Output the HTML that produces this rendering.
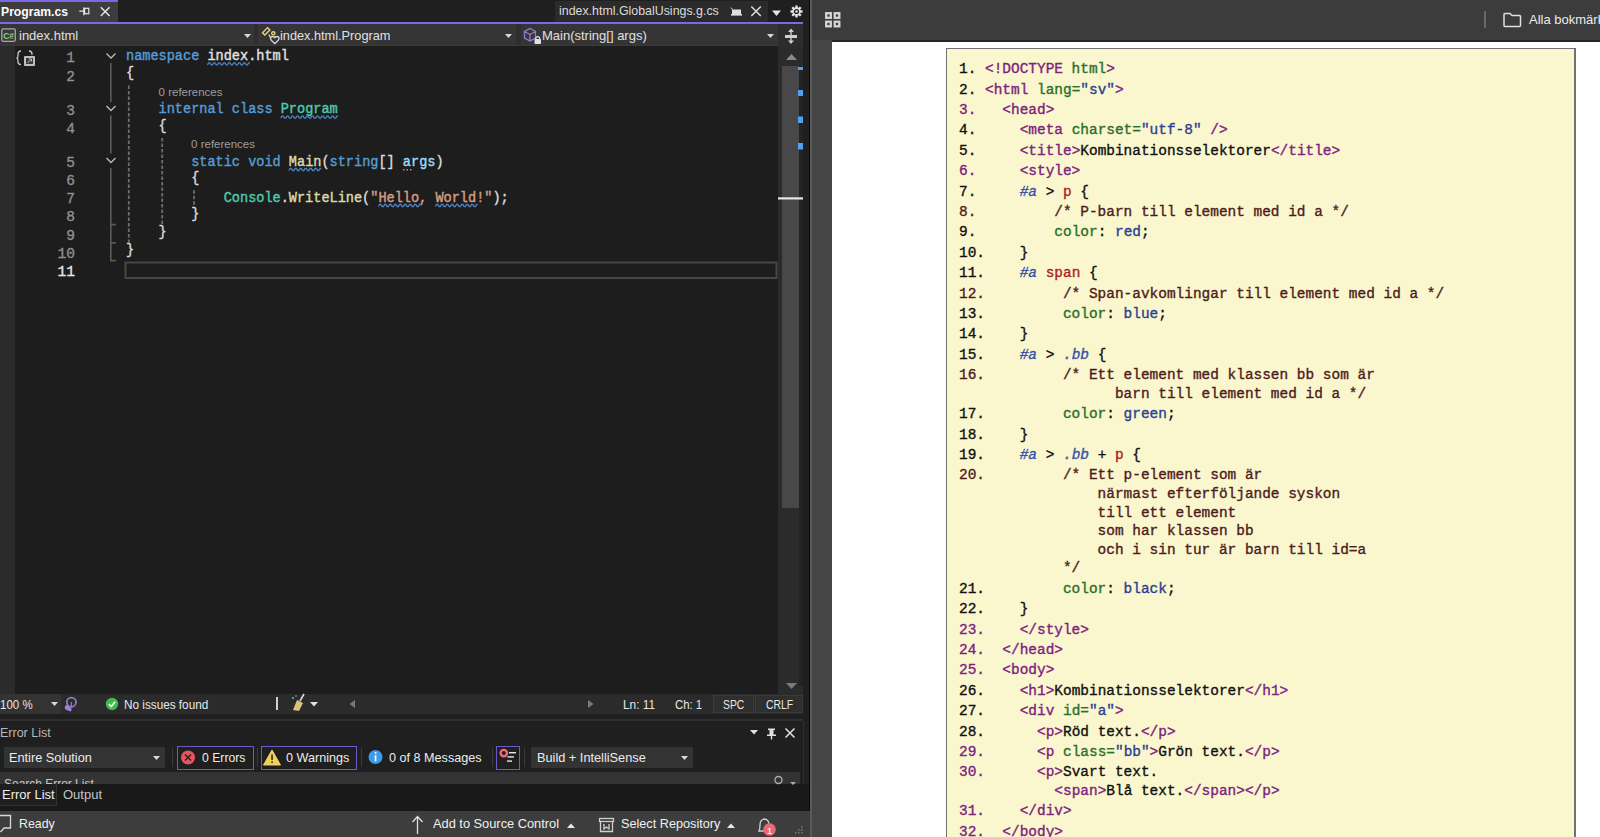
<!DOCTYPE html>
<html><head><meta charset="utf-8">
<style>
*{margin:0;padding:0;box-sizing:border-box}
html,body{width:1600px;height:837px;overflow:hidden;background:#1f1f1f;font-family:"Liberation Sans",sans-serif}
.a{position:absolute}
.ui{font-family:"Liberation Sans",sans-serif;font-size:12.5px;color:#e0e0e0;white-space:nowrap}
.code{font-family:"Liberation Mono",monospace;font-size:13.5px;white-space:pre;line-height:18px}
.bl{position:absolute;left:959.2px;transform:scaleX(1.0463);transform-origin:0 0;font-family:"Liberation Mono",monospace;font-size:13.8px;white-space:pre;line-height:20px;height:20px;color:#111;-webkit-text-stroke:0.35px currentColor}
.bl .t{color:#7d237d}.bl .g{color:#2a702a}.bl .v{color:#2b4190}.bl .k{color:#111}.bl .s{color:#3a52a8;font-style:italic}.bl .r{color:#b01c1c}.bl .c{color:#4e1b1b}
.ed{left:125.8px;transform:scaleX(0.969);transform-origin:0 0;font-family:"Liberation Mono",monospace;font-size:14px;white-space:pre;line-height:18px;height:18px;color:#dcdcdc;-webkit-text-stroke:0.4px currentColor}
.ed .kw{color:#569cd6}.ed .id{color:#e0e0e0}.ed .ty{color:#4ec9b0}.ed .fn{color:#dcdcaa}.ed .pa{color:#9cdcfe}.ed .st{color:#d69d85}.ed .pu{color:#dcdcdc}
.ed .sq{}
.ed .dot{}
.ed .br{position:relative;top:-1.5px}
.ln,.lnc{left:38px;width:37px;text-align:right;font-family:"Liberation Mono",monospace;font-size:14.5px;line-height:18px;height:18px;color:#909090;-webkit-text-stroke:0.35px currentColor}
.lnc{color:#e8e8e8}
.cl{font-family:"Liberation Sans",sans-serif;font-size:11.5px;color:#9d9d9d;line-height:14px;white-space:nowrap}
/*EXTRA*/
</style></head><body>
<!-- ============ VS ============ -->
<div class="a" style="left:0;top:0;width:810px;height:837px;background:#1f1f1f"></div>
<!-- tab well -->
<div class="a" style="left:0;top:0;width:118px;height:2px;background:#7a68e6"></div>
<div class="a" style="left:0;top:2px;width:118px;height:20px;background:#3d3d3d"></div>
<div class="a ui" style="left:1px;top:4.7px;font-weight:bold;font-size:12.2px;color:#fff">Program.cs</div>
<div class="a" style="left:555px;top:1px;width:213px;height:21px;background:#2b2b2b"></div>
<div class="a ui" style="left:559px;top:4.2px;font-size:12.4px;color:#dcdcdc">index.html.GlobalUsings.g.cs</div>
<div class="a" style="left:0;top:22px;width:803px;height:2px;background:#7a68e6"></div>
<!-- nav bar -->
<div class="a" style="left:0;top:24px;width:803px;height:22px;background:#2e2e2e"></div>
<div class="a" style="left:0;top:24px;width:254px;height:22px;background:#353535"></div>
<div class="a" style="left:258px;top:24px;width:258px;height:22px;background:#353535"></div>
<div class="a" style="left:521px;top:24px;width:257px;height:22px;background:#353535"></div>
<div class="a ui" style="left:19px;top:28px;font-size:13px">index.html</div>
<div class="a ui" style="left:280px;top:28px;font-size:13px;transform:scaleX(0.980);transform-origin:0 0">index.html.Program</div>
<div class="a ui" style="left:542px;top:28px;font-size:13px">Main(string[] args)</div>
<div class="a" style="left:0;top:45px;width:778px;height:1px;background:#3a3a3a"></div>
<!-- editor -->
<div class="a" style="left:0;top:46px;width:15px;height:648px;background:#2b2b2b"></div>
<div class="a" style="left:15px;top:46px;width:763px;height:648px;background:#1d1d1d"></div>
<!-- scrollbar -->
<div class="a" style="left:778px;top:46px;width:25px;height:648px;background:#2b2b2b"></div>
<div class="a" style="left:782px;top:66px;width:17px;height:442px;background:#484848"></div>
<div class="a" style="left:799px;top:66px;width:4px;height:620px;background:#232323"></div>
<svg class="a" style="left:778px;top:46px" width="25" height="648" viewBox="778 46 25 648">
 <path d="M786 60 H797 L791.5 54 Z" fill="#8a8a8a"/>
 <g fill="#4ca3f2"><rect x="798" y="67" width="5" height="3"/><rect x="798" y="90" width="5" height="6"/><rect x="798" y="116.5" width="5" height="6.5"/><rect x="798" y="143" width="5" height="6.5"/></g>
 <rect x="778" y="197.3" width="25" height="2.2" fill="#e8e8e8"/>
</svg>

<!-- status row -->
<div class="a" style="left:0;top:694px;width:803px;height:20px;background:#2b2b2b"></div>
<div class="a" style="left:0;top:694px;width:61px;height:20px;background:#333"></div>
<div class="a ui" style="left:0;top:697.8px;font-size:12.5px;color:#e8e8e8;transform:scaleX(0.920);transform-origin:0 0">100 %</div>
<div class="a ui" style="left:124px;top:697.8px;font-size:12.5px;color:#e8e8e8;transform:scaleX(0.940);transform-origin:0 0">No issues found</div>
<div class="a ui" style="left:623px;top:697.8px;font-size:12.5px;color:#e8e8e8;transform:scaleX(0.950);transform-origin:0 0">Ln: 11</div>
<div class="a ui" style="left:675px;top:697.8px;font-size:12.5px;color:#e8e8e8;transform:scaleX(0.910);transform-origin:0 0">Ch: 1</div>
<div class="a" style="left:713px;top:695px;width:41px;height:18px;background:#2f2f2f;border:1px solid #3a3a3a"></div>
<div class="a" style="left:755px;top:695px;width:48px;height:18px;background:#2f2f2f;border:1px solid #3a3a3a"></div>
<div class="a ui" style="left:723px;top:697.8px;font-size:12.5px;color:#e8e8e8;transform:scaleX(0.830);transform-origin:0 0">SPC</div>
<div class="a ui" style="left:766px;top:697.8px;font-size:12.5px;color:#e8e8e8;transform:scaleX(0.830);transform-origin:0 0">CRLF</div>

<!-- error list -->
<div class="a" style="left:0;top:719px;width:803px;height:2px;background:#2e2e2e"></div>
<div class="a ui" style="left:0;top:726px;font-size:12.5px;color:#b8b8b8">Error List</div>
<div class="a" style="left:4px;top:747px;width:161px;height:21px;background:#333"></div>
<div class="a ui" style="left:9px;top:750px;font-size:13px;color:#ececec;transform:scaleX(0.980);transform-origin:0 0">Entire Solution</div>
<div class="a" style="left:177px;top:746px;width:77px;height:24px;border:1.5px solid #6a5cc8"></div>
<div class="a ui" style="left:202px;top:750px;font-size:13px;color:#ececec;transform:scaleX(0.940);transform-origin:0 0">0 Errors</div>
<div class="a" style="left:261px;top:746px;width:96px;height:24px;border:1.5px solid #6a5cc8"></div>
<div class="a ui" style="left:286px;top:750px;font-size:13px;color:#ececec;transform:scaleX(0.970);transform-origin:0 0">0 Warnings</div>
<div class="a ui" style="left:389px;top:750px;font-size:13px;color:#ececec;transform:scaleX(0.970);transform-origin:0 0">0 of 8 Messages</div>
<div class="a" style="left:496px;top:746px;width:24px;height:24px;border:1.5px solid #6a5cc8"></div>
<div class="a" style="left:531px;top:747px;width:162px;height:21px;background:#333"></div>
<div class="a ui" style="left:537px;top:750px;font-size:13px;color:#ececec;transform:scaleX(0.980);transform-origin:0 0">Build + IntelliSense</div>
<div class="a" style="left:0;top:772px;width:800px;height:12px;background:#333;overflow:hidden">
 <div class="a ui" style="left:4px;top:4px;font-size:13px;color:#c8c8c8;transform:scaleX(0.920);transform-origin:0 0">Search Error List</div>
</div>
<div class="a" style="left:0;top:784px;width:809px;height:27px;background:#191919"></div>
<div class="a" style="left:0;top:784px;width:57px;height:22px;background:#1f1f1f;border:1px solid #333;border-left:none;border-top:none"></div>
<div class="a ui" style="left:2px;top:787px;font-size:13px;color:#f0f0f0">Error List</div>
<div class="a ui" style="left:63px;top:787px;font-size:13px;color:#c4c4c4">Output</div>

<div class="a" style="left:803px;top:721px;width:1px;height:63px;background:#2e2e2e"></div>
<!-- bottom status -->
<div class="a" style="left:0;top:811px;width:810px;height:26px;background:#3d3d3d"></div>
<div class="a ui" style="left:19px;top:816px;font-size:13px;color:#f0f0f0;transform:scaleX(0.950);transform-origin:0 0">Ready</div>
<div class="a ui" style="left:433px;top:816px;font-size:13px;color:#f0f0f0;transform:scaleX(0.985);transform-origin:0 0">Add to Source Control</div>
<div class="a ui" style="left:621px;top:816px;font-size:13px;color:#f0f0f0;transform:scaleX(0.975);transform-origin:0 0">Select Repository</div>

<svg class="a" style="left:0;top:680px" width="810" height="157" viewBox="0 680 810 157">
 <path d="M786 683 H797 L791.5 689 Z" fill="#7a7a7a"/>
 <path d="M51 702 H58 L54.5 706 Z" fill="#d8d8d8"/>
 <circle cx="71.4" cy="702.2" r="4.6" fill="none" stroke="#8f78c8" stroke-width="1.8"/>
 <path d="M65 706 Q64 709 66.5 710 L70.5 711.5 L72 709.5 L68.5 705.5 Q67 704.5 65 706 Z" fill="#9a80d8"/>
 <path d="M71.4 702 V708" stroke="#8f78c8" stroke-width="1.3"/>
 <circle cx="112" cy="704" r="6.2" fill="#3fb950"/>
 <path d="M108.8 704 L111.2 706.5 L115.2 701.7" stroke="#fff" stroke-width="1.6" fill="none"/>
 <rect x="276" y="697" width="2" height="13" fill="#d0d0d0"/>
 <g><path d="M293 710 L297 700 L303 703 L299 711 Z" fill="#d8c57a"/><path d="M300 701 L304 694" stroke="#d8d8d8" stroke-width="1.6"/><circle cx="293" cy="698" r="1" fill="#6db3f2"/><circle cx="296" cy="696" r="0.8" fill="#6db3f2"/></g>
 <path d="M310 702 H318 L314 706.5 Z" fill="#e0e0e0"/>
 <path d="M355 700 V708 L349.5 704 Z" fill="#7a7a7a"/>
 <path d="M588 700 V708 L593.5 704 Z" fill="#7a7a7a"/>
 <!-- error list header icons -->
 <path d="M750 730 H758 L754 734.5 Z" fill="#e0e0e0"/>
 <g fill="#e0e0e0"><rect x="768" y="728.5" width="7" height="1.6"/><rect x="769.5" y="729" width="4" height="6"/><rect x="767" y="734.5" width="9" height="1.5"/><rect x="770.8" y="735" width="1.4" height="4.5"/></g>
 <path d="M785.5 728.5 L794.5 737.5 M794.5 728.5 L785.5 737.5" stroke="#e0e0e0" stroke-width="1.5"/>
 <path d="M153 756 H160 L156.5 760 Z M681 756 H688 L684.5 760 Z" fill="#d8d8d8"/>
 <g fill="#3a3a3a"><rect x="172" y="748" width="1" height="19"/><rect x="257" y="748" width="1" height="19"/><rect x="361" y="748" width="1" height="19"/><rect x="492" y="748" width="1" height="19"/><rect x="524" y="748" width="1" height="19"/></g>
 <circle cx="188" cy="757.5" r="7" fill="#e8545e"/>
 <path d="M185 754.5 L191 760.5 M191 754.5 L185 760.5" stroke="#222" stroke-width="1.4"/>
 <path d="M272 750 L280.5 765 H263.5 Z" fill="#f2cf5b" stroke="#f2cf5b" stroke-width="1" stroke-linejoin="round"/>
 <rect x="271.3" y="754.5" width="1.5" height="5.5" fill="#222"/><rect x="271.3" y="761.3" width="1.5" height="1.6" fill="#222"/>
 <circle cx="375.5" cy="757" r="7" fill="#3c9bea"/>
 <rect x="374.7" y="755.3" width="1.7" height="6" fill="#fff"/><rect x="374.7" y="752" width="1.7" height="1.8" fill="#fff"/>
 <circle cx="503.8" cy="753.1" r="3.2" fill="none" stroke="#f06a78" stroke-width="2.4"/>
 <g fill="#e8e8e8"><rect x="509" y="752" width="7" height="1.4"/><rect x="507.5" y="756.2" width="6.5" height="1.4"/><rect x="507" y="760.4" width="5" height="1.4"/></g>
 <g fill="none" stroke="#aaa" stroke-width="1.4"><circle cx="778.5" cy="780" r="3.5"/></g>
 <path d="M790 782 H796 L793 785 Z" fill="#aaa"/>
 <!-- bottom status icons -->
 <path d="M-1 815.5 H10.5 V828 H4 L0.5 832" fill="none" stroke="#d8d8d8" stroke-width="1.3"/>
 <path d="M417.5 834 V817 M412.5 822 L417.5 816.5 L422.5 822" fill="none" stroke="#e0e0e0" stroke-width="1.3"/>
 <path d="M567 828 H575 L571 823.5 Z M727 828 H735 L731 823.5 Z" fill="#e8e8e8"/>
 <g fill="none" stroke="#cfcfcf" stroke-width="1.3"><rect x="599.5" y="818.5" width="14" height="3"/><path d="M600.5 821.5 V831.5 H612.5 V821.5 M604 824 V829 L606.5 827 L609 829 V824"/></g>
 <path d="M759 831 Q760 829 760 825 Q760 819.5 764.5 819 Q769 819.5 769 825 Q769 829 770 831 Z" fill="none" stroke="#cfcfcf" stroke-width="1.3"/>
 <circle cx="769.5" cy="829.5" r="6.3" fill="#e8697a"/>
 <text x="767" y="833.5" font-family="Liberation Sans" font-size="9.5" fill="#fff">1</text>
 <g fill="#777"><rect x="801" y="826" width="1.5" height="1.5"/><rect x="798" y="829" width="1.5" height="1.5"/><rect x="801" y="829" width="1.5" height="1.5"/><rect x="795" y="832" width="1.5" height="1.5"/><rect x="798" y="832" width="1.5" height="1.5"/><rect x="801" y="832" width="1.5" height="1.5"/></g>
</svg>

<!-- top icons -->
<svg class="a" style="left:0;top:0" width="810" height="46">
 <!-- pin tab1 -->
 <g stroke="#e6e6e6" stroke-width="1.4" fill="none">
  <path d="M79.3 11.2 H83.5 M83.8 7.6 V15.2" stroke-width="1.2"/>
  <rect x="84.6" y="8.3" width="4.2" height="5.4" stroke-width="1.2"/>
  <path d="M100.8 7.3 L109.6 16.1 M109.6 7.3 L100.8 16.1" stroke-width="1.45"/>
 </g>
 <!-- tab2 preview icon & close -->
 <g fill="#e0e0e0"><rect x="732" y="9.5" width="9" height="5"/><rect x="731" y="14" width="11" height="1.6"/>
 <path d="M730 7 L733 9 L732.5 10 Z"/></g>
 <path d="M751.3 6.5 L760.8 16 M760.8 6.5 L751.3 16" stroke="#dcdcdc" stroke-width="1.5"/>
 <path d="M772 10.5 H781 L776.5 16 Z" fill="#e6e6e6"/>
 <g transform="translate(796.5 11.5)" fill="#e6e6e6">
  <circle r="4.2"/>
  <g><rect x="-1.2" y="-6" width="2.4" height="12"/><rect x="-6" y="-1.2" width="12" height="2.4"/>
  <rect x="-1.2" y="-6" width="2.4" height="12" transform="rotate(45)"/><rect x="-1.2" y="-6" width="2.4" height="12" transform="rotate(-45)"/></g>
  <circle r="2.6" fill="#1f1f1f"/><circle r="1.3" fill="#e6e6e6"/>
 </g>
 <!-- C# icon -->
 <rect x="1.8" y="28.8" width="13.5" height="12.5" rx="1.5" fill="#3a3a3a" stroke="#a8a8a8" stroke-width="1.3"/>
 <text x="3.2" y="38.8" font-family="Liberation Sans" font-weight="bold" font-size="8.5" fill="#8fd08f">C#</text>
 <!-- combo arrows -->
 <path d="M244 34 H251 L247.5 38 Z M505 34 H512 L508.5 38 Z M767 34 H774 L770.5 38 Z" fill="#d8d8d8"/>
 <!-- class icon -->
 <g fill="none" stroke="#e8d48a" stroke-width="1.4">
  <rect x="-3.6" y="-1.6" width="7.2" height="3.2" transform="translate(266.2 31.3) rotate(-45)"/>
  <circle cx="273.3" cy="33.3" r="1.6"/>
  <path d="M269 34.5 L270 37"/>
 </g>
 <path d="M270.5 38.5 Q270.5 36.5 272.5 36.5 Q274.5 36.5 274.8 38 Q275.1 36.5 277 36.5 Q279 36.5 279 38.5 Q279 40 274.8 43.5 Q270.5 40 270.5 38.5 Z" fill="none" stroke="#d8d8d8" stroke-width="1.4"/>
 <!-- method cube -->
 <g fill="none" stroke="#9c84d8" stroke-width="1.3" opacity="0.9">
  <path d="M530 28.5 L535.5 31.5 V38 L530 41 L524.5 38 V31.5 Z M524.5 31.5 L530 34.5 L535.5 31.5 M530 34.5 V41"/>
 </g>
 <rect x="534.5" y="39" width="6.5" height="5" rx="0.8" fill="#e0e0e0"/>
 <path d="M535.8 39.5 V37.8 Q537.75 35.3 539.7 37.8 V39.5" fill="none" stroke="#e0e0e0" stroke-width="1.2"/>
 <!-- split button -->
 <rect x="778" y="24" width="25" height="22" fill="#2d2d2d"/>
 <g fill="#cfcfcf">
  <rect x="785" y="35" width="12" height="3"/>
  <path d="M791 28.5 L788 32 H794 Z M791 44 L788 40.5 H794 Z"/>
  <rect x="790.3" y="31" width="1.4" height="4"/><rect x="790.3" y="38" width="1.4" height="3"/>
 </g>
</svg>
<!-- separator -->
<div class="a" style="left:809px;top:0;width:1px;height:811px;background:#0a0a0a"></div>
<div class="a" style="left:810px;top:0;width:2px;height:837px;background:#5a5a5a"></div>

<!-- ============ Chrome ============ -->
<div class="a" style="left:812px;top:0;width:788px;height:40px;background:#3c3c3c"></div>
<div class="a" style="left:832px;top:40px;width:768px;height:2px;background:#262626"></div>
<div class="a" style="left:812px;top:40px;width:20px;height:797px;background:#454545"></div>
<div class="a" style="left:832px;top:42px;width:768px;height:795px;background:#fff"></div>
<div class="a" style="left:946px;top:48px;width:630px;height:800px;background:#faf7cf;border:1px solid #707070;border-right-width:2px"></div>

<svg class="a" style="left:812px;top:0" width="788" height="42" viewBox="812 0 788 42">
 <g fill="none" stroke="#d4d4d4" stroke-width="2.3">
  <rect x="826.2" y="13.2" width="4.6" height="4.6"/><rect x="834.7" y="13.2" width="4.6" height="4.6"/>
  <rect x="826.2" y="21.7" width="4.6" height="4.6"/><rect x="834.7" y="21.7" width="4.6" height="4.6"/>
 </g>
 <rect x="1484" y="11" width="2" height="17" rx="1" fill="#6a6a6a"/>
 <path d="M1504 14.5 Q1504 13.5 1505 13.5 H1510 L1512 15.5 H1519.5 Q1520.5 15.5 1520.5 16.5 V25.5 Q1520.5 26.5 1519.5 26.5 H1505 Q1504 26.5 1504 25.5 Z" fill="none" stroke="#e0e0e0" stroke-width="1.5"/>
</svg>
<div class="a ui" style="left:1529px;top:12px;font-size:13px;color:#ececec">Alla bokmärken</div>
<div class="a ln" style="top:48.70px">1</div>
<div class="a ed" style="top:46.90px"><span class="kw">namespace</span><span class="pu"> </span><span class="id sq">index</span><span class="id">.html</span></div>
<div class="a ln" style="top:67.60px">2</div>
<div class="a ed" style="top:65.80px"><span class="pu"><span class="br">{</span></span></div>
<div class="a cl" style="left:158.6px;top:85.10px">0 references</div>
<div class="a ln" style="top:101.90px">3</div>
<div class="a ed" style="top:100.10px"><span class="pu">    </span><span class="kw">internal</span><span class="pu"> </span><span class="kw">class</span><span class="pu"> </span><span class="ty sq">Program</span></div>
<div class="a ln" style="top:119.90px">4</div>
<div class="a ed" style="top:118.10px"><span class="pu">    <span class="br">{</span></span></div>
<div class="a cl" style="left:191.1px;top:137.00px">0 references</div>
<div class="a ln" style="top:154.30px">5</div>
<div class="a ed" style="top:152.50px"><span class="pu">        </span><span class="kw">static</span><span class="pu"> </span><span class="kw">void</span><span class="pu"> </span><span class="fn sq">Main</span><span class="pu">(</span><span class="kw">string</span><span class="pu">[] </span><span class="pa dot">args</span><span class="pu">)</span></div>
<div class="a ln" style="top:172.30px">6</div>
<div class="a ed" style="top:170.50px"><span class="pu">        <span class="br">{</span></span></div>
<div class="a ln" style="top:190.30px">7</div>
<div class="a ed" style="top:188.50px"><span class="pu">            </span><span class="ty">Console</span><span class="pu">.</span><span class="fn">WriteLine</span><span class="pu">(</span><span class="st">&quot;</span><span class="st sq">Hello</span><span class="st">, </span><span class="st sq">World</span><span class="st">!&quot;</span><span class="pu">);</span></div>
<div class="a ln" style="top:208.40px">8</div>
<div class="a ed" style="top:206.60px"><span class="pu">        <span class="br">}</span></span></div>
<div class="a ln" style="top:226.50px">9</div>
<div class="a ed" style="top:224.70px"><span class="pu">    <span class="br">}</span></span></div>
<div class="a ln" style="top:244.60px">10</div>
<div class="a ed" style="top:242.80px"><span class="pu"><span class="br">}</span></span></div>
<div class="a lnc" style="top:262.70px">11</div>
<div class="a ed" style="top:260.90px"></div>
<svg class="a" style="left:0;top:0" width="778" height="300"><path d="M207.40 64.90 l1.3 -2.0 l1.2 0 l1.3 2.0 l1.2 0 l1.3 -2.0 l1.2 0 l1.3 2.0 l1.2 0 l1.3 -2.0 l1.2 0 l1.3 2.0 l1.2 0 l1.3 -2.0 l1.2 0 l1.3 2.0 l1.2 0 l1.3 -2.0 l1.2 0 l1.3 2.0 l1.2 0 l1.3 -2.0 l1.2 0 l1.3 2.0 l1.2 0 l1.3 -2.0 l1.2 0 l1.3 2.0 l1.2 0 l1.3 -2.0 l1.2 0 l1.3 2.0 l1.2 0 l1.3 -2.0 l1.2 0 M280.66 118.10 l1.3 -2.0 l1.2 0 l1.3 2.0 l1.2 0 l1.3 -2.0 l1.2 0 l1.3 2.0 l1.2 0 l1.3 -2.0 l1.2 0 l1.3 2.0 l1.2 0 l1.3 -2.0 l1.2 0 l1.3 2.0 l1.2 0 l1.3 -2.0 l1.2 0 l1.3 2.0 l1.2 0 l1.3 -2.0 l1.2 0 l1.3 2.0 l1.2 0 l1.3 -2.0 l1.2 0 l1.3 2.0 l1.2 0 l1.3 -2.0 l1.2 0 l1.3 2.0 l1.2 0 l1.3 -2.0 l1.2 0 l1.3 2.0 l1.2 0 l1.3 -2.0 l1.2 0 l1.3 2.0 l1.2 0 l1.3 -2.0 l1.2 0 l1.3 2.0 l1.2 0 l1.3 -2.0 l1.2 0 M288.80 170.50 l1.3 -2.0 l1.2 0 l1.3 2.0 l1.2 0 l1.3 -2.0 l1.2 0 l1.3 2.0 l1.2 0 l1.3 -2.0 l1.2 0 l1.3 2.0 l1.2 0 l1.3 -2.0 l1.2 0 l1.3 2.0 l1.2 0 l1.3 -2.0 l1.2 0 l1.3 2.0 l1.2 0 l1.3 -2.0 l1.2 0 l1.3 2.0 l1.2 0 l1.3 -2.0 l1.2 0 M378.34 206.50 l1.3 -2.0 l1.2 0 l1.3 2.0 l1.2 0 l1.3 -2.0 l1.2 0 l1.3 2.0 l1.2 0 l1.3 -2.0 l1.2 0 l1.3 2.0 l1.2 0 l1.3 -2.0 l1.2 0 l1.3 2.0 l1.2 0 l1.3 -2.0 l1.2 0 l1.3 2.0 l1.2 0 l1.3 -2.0 l1.2 0 l1.3 2.0 l1.2 0 l1.3 -2.0 l1.2 0 l1.3 2.0 l1.2 0 l1.3 -2.0 l1.2 0 l1.3 2.0 l1.2 0 l1.3 -2.0 l1.2 0 M435.32 206.50 l1.3 -2.0 l1.2 0 l1.3 2.0 l1.2 0 l1.3 -2.0 l1.2 0 l1.3 2.0 l1.2 0 l1.3 -2.0 l1.2 0 l1.3 2.0 l1.2 0 l1.3 -2.0 l1.2 0 l1.3 2.0 l1.2 0 l1.3 -2.0 l1.2 0 l1.3 2.0 l1.2 0 l1.3 -2.0 l1.2 0 l1.3 2.0 l1.2 0 l1.3 -2.0 l1.2 0 l1.3 2.0 l1.2 0 l1.3 -2.0 l1.2 0 l1.3 2.0 l1.2 0 l1.3 -2.0 l1.2 0" fill="none" stroke="#4f82c2" stroke-width="1.3"/></svg>
<svg class="a" style="left:0;top:46px" width="778" height="240" viewBox="0 46 778 240">
 <g fill="none" stroke="#bdbdbd" stroke-width="1.3">
  <path d="M106.5 53.5 L111 58 L115.5 53.5"/>
  <path d="M106.5 106 L111 110.5 L115.5 106"/>
  <path d="M106.5 158 L111 162.5 L115.5 158"/>
 </g>
 <g fill="none" stroke="#5a5a5a" stroke-width="1.6">
  <path d="M110.8 63 V102 M110.8 115.5 V153.5 M110.8 168 V260.6 H115.8 M110.8 224.6 H115.8 M110.8 242.9 H115.8"/>
 </g>
 <g fill="none" stroke="#6e6e6e" stroke-width="1.8" stroke-dasharray="3.5 2">
  <path d="M128.8 85.5 V243.5 M162.2 138 V225 M194 190.2 V207"/>
 </g>
 <rect x="125.5" y="262.5" width="651" height="15.5" fill="none" stroke="#474747" stroke-width="2"/>
 <g fill="#9a9a9a"><rect x="403" y="169" width="1.5" height="1.5"/><rect x="406.5" y="169" width="1.5" height="1.5"/><rect x="410" y="169" width="1.5" height="1.5"/></g>
 <g fill="none" stroke="#c8c8c8" stroke-width="1.3">
  <path d="M21 51 Q18 51 18 54 V56 Q18 58 16.5 58.2 Q18 58.5 18 60.5 V62 Q18 64.5 21 64.5"/>
  <path d="M29 51 Q32 51 32 54 V55"/>
 </g>
 <rect x="24" y="56" width="11" height="10" fill="#bfbfbf" rx="1"/>
 <rect x="26" y="58" width="7" height="6" fill="#3a3a3a"/>
 <path d="M27.5 63 L31.5 59 M29 59 H31.5 V61.5" stroke="#bfbfbf" stroke-width="1" fill="none"/>
</svg>
<div class="bl" style="top:60.20px"><span class="k">1. </span><span class="t">&lt;!DOCTYPE</span><span class="k"> </span><span class="g">html</span><span class="t">&gt;</span></div>
<div class="bl" style="top:80.60px"><span class="k">2. </span><span class="t">&lt;html</span><span class="k"> </span><span class="g">lang=</span><span class="v">&quot;sv&quot;</span><span class="t">&gt;</span></div>
<div class="bl" style="top:101.00px"><span class="t">3. </span><span class="t">  &lt;head&gt;</span></div>
<div class="bl" style="top:121.40px"><span class="k">4. </span><span class="k">    </span><span class="t">&lt;meta</span><span class="k"> </span><span class="g">charset=</span><span class="v">&quot;utf-8&quot;</span><span class="t"> /&gt;</span></div>
<div class="bl" style="top:141.80px"><span class="k">5. </span><span class="k">    </span><span class="t">&lt;title&gt;</span><span class="k">Kombinationsselektorer</span><span class="t">&lt;/title&gt;</span></div>
<div class="bl" style="top:162.20px"><span class="t">6. </span><span class="t">    &lt;style&gt;</span></div>
<div class="bl" style="top:182.60px"><span class="k">7. </span><span class="k">    </span><span class="s">#a</span><span class="k"> &gt; </span><span class="r">p</span><span class="k"> {</span></div>
<div class="bl" style="top:203.00px"><span class="c">8. </span><span class="c">        /* P-barn till element med id a */</span></div>
<div class="bl" style="top:223.40px"><span class="k">9. </span><span class="k">        </span><span class="g">color</span><span class="k">: </span><span class="v">red</span><span class="k">;</span></div>
<div class="bl" style="top:243.80px"><span class="k">10.</span><span class="k">    }</span></div>
<div class="bl" style="top:264.20px"><span class="k">11.</span><span class="k">    </span><span class="s">#a</span><span class="k"> </span><span class="r">span</span><span class="k"> {</span></div>
<div class="bl" style="top:284.60px"><span class="c">12.</span><span class="c">         /* Span-avkomlingar till element med id a */</span></div>
<div class="bl" style="top:305.00px"><span class="k">13.</span><span class="k">         </span><span class="g">color</span><span class="k">: </span><span class="v">blue</span><span class="k">;</span></div>
<div class="bl" style="top:325.40px"><span class="k">14.</span><span class="k">    }</span></div>
<div class="bl" style="top:345.80px"><span class="k">15.</span><span class="k">    </span><span class="s">#a</span><span class="k"> &gt; </span><span class="s">.bb</span><span class="k"> {</span></div>
<div class="bl" style="top:366.20px"><span class="c">16.</span><span class="c">         /* Ett element med klassen bb som är</span></div>
<div class="bl" style="top:384.80px">   <span class="c">               barn till element med id a */</span></div>
<div class="bl" style="top:405.20px"><span class="k">17.</span><span class="k">         </span><span class="g">color</span><span class="k">: </span><span class="v">green</span><span class="k">;</span></div>
<div class="bl" style="top:425.60px"><span class="k">18.</span><span class="k">    }</span></div>
<div class="bl" style="top:446.00px"><span class="k">19.</span><span class="k">    </span><span class="s">#a</span><span class="k"> &gt; </span><span class="s">.bb</span><span class="k"> + </span><span class="r">p</span><span class="k"> {</span></div>
<div class="bl" style="top:466.40px"><span class="c">20.</span><span class="c">         /* Ett p-element som är</span></div>
<div class="bl" style="top:485.00px">   <span class="c">             närmast efterföljande syskon</span></div>
<div class="bl" style="top:503.60px">   <span class="c">             till ett element</span></div>
<div class="bl" style="top:522.20px">   <span class="c">             som har klassen bb</span></div>
<div class="bl" style="top:540.80px">   <span class="c">             och i sin tur är barn till id=a</span></div>
<div class="bl" style="top:559.40px">   <span class="c">         */</span></div>
<div class="bl" style="top:579.80px"><span class="k">21.</span><span class="k">         </span><span class="g">color</span><span class="k">: </span><span class="v">black</span><span class="k">;</span></div>
<div class="bl" style="top:600.20px"><span class="k">22.</span><span class="k">    }</span></div>
<div class="bl" style="top:620.60px"><span class="t">23.</span><span class="t">    &lt;/style&gt;</span></div>
<div class="bl" style="top:641.00px"><span class="t">24.</span><span class="t">  &lt;/head&gt;</span></div>
<div class="bl" style="top:661.40px"><span class="t">25.</span><span class="t">  &lt;body&gt;</span></div>
<div class="bl" style="top:681.80px"><span class="k">26.</span><span class="k">    </span><span class="t">&lt;h1&gt;</span><span class="k">Kombinationsselektorer</span><span class="t">&lt;/h1&gt;</span></div>
<div class="bl" style="top:702.20px"><span class="k">27.</span><span class="k">    </span><span class="t">&lt;div</span><span class="k"> </span><span class="g">id=</span><span class="v">&quot;a&quot;</span><span class="t">&gt;</span></div>
<div class="bl" style="top:722.60px"><span class="k">28.</span><span class="k">      </span><span class="t">&lt;p&gt;</span><span class="k">Röd text.</span><span class="t">&lt;/p&gt;</span></div>
<div class="bl" style="top:743.00px"><span class="t">29.</span><span class="k">      </span><span class="t">&lt;p</span><span class="k"> </span><span class="g">class=</span><span class="v">&quot;bb&quot;</span><span class="t">&gt;</span><span class="k">Grön text.</span><span class="t">&lt;/p&gt;</span></div>
<div class="bl" style="top:763.40px"><span class="t">30.</span><span class="k">      </span><span class="t">&lt;p&gt;</span><span class="k">Svart text.</span></div>
<div class="bl" style="top:782.00px">   <span class="k">        </span><span class="t">&lt;span&gt;</span><span class="k">Blå text.</span><span class="t">&lt;/span&gt;&lt;/p&gt;</span></div>
<div class="bl" style="top:802.40px"><span class="t">31.</span><span class="t">    &lt;/div&gt;</span></div>
<div class="bl" style="top:822.80px"><span class="t">32.</span><span class="t">  &lt;/body&gt;</span></div>
</body></html>
